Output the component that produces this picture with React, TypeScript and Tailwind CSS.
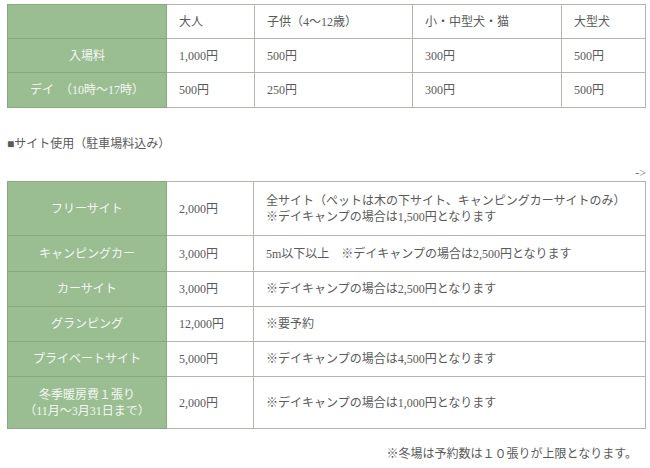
import React from "react";

const font = { fontFamily: '"Liberation Serif", "Noto Sans CJK JP", serif' };

const G = "bg-[#9abe92] text-[#f4f7f2] text-center border border-[#86aa7e]";
const W = "bg-white text-[#5a5a5a] text-left pl-[12px] border border-[#b4b4ac]";

export default function App() {
  const t1 = [
    { h: "入場料", v: ["1,000円", "500円", "300円", "500円"] },
    { h: "デイ　（10時～17時）", v: ["500円", "250円", "300円", "500円"] },
  ];
  const t2: { h: React.ReactNode; p: string; n: React.ReactNode; hh: string }[] = [
    {
      h: "フリーサイト",
      p: "2,000円",
      n: (
        <>
          全サイト（ペットは木の下サイト、キャンピングカーサイトのみ）
          <br />
          ※デイキャンプの場合は1,500円となります
        </>
      ),
      hh: "h-[54px]",
    },
    { h: "キャンピングカー", p: "3,000円", n: "5m以下以上　※デイキャンプの場合は2,500円となります", hh: "h-[36px]" },
    { h: "カーサイト", p: "3,000円", n: "※デイキャンプの場合は2,500円となります", hh: "h-[35px]" },
    { h: "グランピング", p: "12,000円", n: "※要予約", hh: "h-[35px]" },
    { h: "プライベートサイト", p: "5,000円", n: "※デイキャンプの場合は4,500円となります", hh: "h-[35px]" },
    {
      h: (
        <>
          冬季暖房費１張り
          <br />
          （11月～3月31日まで）
        </>
      ),
      p: "2,000円",
      n: "※デイキャンプの場合は1,000円となります",
      hh: "h-[52px]",
    },
  ];
  return (
    <div className="w-[650px] h-[468px] bg-white overflow-hidden text-[12px] leading-[16px]" style={font}>
      <div className="pt-[4px] pl-[7px]">
        <table className="border-collapse w-[638px] table-fixed">
          <colgroup>
            <col className="w-[159px]" />
            <col className="w-[88px]" />
            <col className="w-[158px]" />
            <col className="w-[149px]" />
            <col className="w-[84px]" />
          </colgroup>
          <tbody>
            <tr className="h-[34px]">
              <td className={G}></td>
              <td className={W}>大人</td>
              <td className={W}>子供（4～12歳）</td>
              <td className={W}>小・中型犬・猫</td>
              <td className={W}>大型犬</td>
            </tr>
            {t1.map((r, i) => (
              <tr key={i} className={i === 0 ? "h-[34px]" : "h-[35px]"}>
                <td className={G}>{r.h}</td>
                {r.v.map((v, j) => (
                  <td key={j} className={W}>
                    {v}
                  </td>
                ))}
              </tr>
            ))}
          </tbody>
        </table>
      </div>
      <div className="pl-[7px] mt-[28px] text-[#5a5a5a]">■サイト使用（駐車場料込み）</div>
      <div className="text-right pr-[4px] mt-[14px] text-[#6a6a6a] leading-[14px] h-[15px]">-&gt;</div>
      <div className="pl-[7px]">
        <table className="border-collapse w-[638px] table-fixed">
          <colgroup>
            <col className="w-[159px]" />
            <col className="w-[87px]" />
            <col className="w-[392px]" />
          </colgroup>
          <tbody>
            {t2.map((r, i) => (
              <tr key={i} className={r.hh}>
                <td className={G}>{r.h}</td>
                <td className={W}>{r.p}</td>
                <td className={W}>{r.n}</td>
              </tr>
            ))}
          </tbody>
        </table>
      </div>
      <div className="text-right pr-[13px] mt-[17px] text-[#5a5a5a]">※冬場は予約数は１０張りが上限となります。</div>
    </div>
  );
}
